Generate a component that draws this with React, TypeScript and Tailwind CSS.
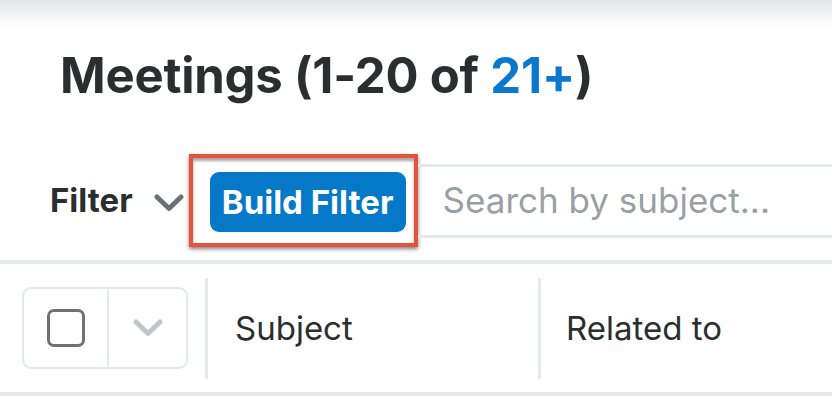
import React from 'react';

const font = { fontFamily: 'Inter, "Noto Sans", sans-serif' };

function Chevron({ className, stroke }: { className?: string; stroke: string }) {
  return (
    <svg className={className} width="30" height="18" viewBox="0 0 30 18" fill="none">
      <polyline points="3,3 15,14.5 27,3" stroke={stroke} strokeWidth="5" strokeLinecap="round" strokeLinejoin="round" />
    </svg>
  );
}

export default function App() {
  return (
    <div className="w-[832px] h-[396px] bg-white overflow-hidden text-[#2b2d2e]" style={font}>
      {/* header shadow */}
      <div className="h-[28px] bg-linear-to-b from-[#e3e4e6] to-white" />

      <h1 className="mt-[24px] pl-[60px] text-[49px] leading-[48px] font-bold tracking-[-0.2px]">
        Meetings (1-20 of <span className="text-[#0b78cf]">21+</span>)
      </h1>

      {/* filter row */}
      <div className="mt-[54px] h-[93px] flex items-center pl-[50px]">
        <span className="text-[33px] font-bold leading-none">Filter</span>
        <Chevron className="ml-[21px] mt-[4px]" stroke="#6b7276" />
        <div className="ml-[5px] w-[229px] h-[93px] shrink-0 border-4 border-[#e5533d] pl-[17px] pt-[14px] shadow-[0_2px_4px_rgba(0,0,0,0.5),inset_0_3px_3px_rgba(0,0,0,0.35)]">
          <button className="w-[196px] h-[60px] rounded-[9px] bg-[#0678c8] text-white text-[33px] font-bold leading-none">
            Build Filter
          </button>
        </div>
        <div className="flex-1 h-[74px] border-y-[3px] border-[#e6e9ec] flex items-center pl-[25px]">
          <span className="text-[35px] leading-none text-[#9a9fa4]">Search by subject...</span>
        </div>
      </div>

      {/* table header */}
      <div className="mt-[13px] h-[136px] border-y-4 border-[#e6e9ec] flex items-center">
        <div className="ml-[22px] w-[166px] h-[82px] shrink-0 border-2 border-[#e6e9ec] rounded-[9px] flex">
          <div className="w-[85px] border-r-2 border-[#e6e9ec] flex items-center justify-center">
            <div className="w-[38px] h-[38px] border-[3px] border-[#6f7173] rounded-[7px]" />
          </div>
          <div className="flex-1 flex items-center justify-center">
            <Chevron stroke="#c2c5c8" />
          </div>
        </div>
        <div className="ml-[17px] w-[3px] h-[101px] bg-[#e6e9ec]" />
        <div className="w-[330px] pl-[27px] text-[33px] leading-none">Subject</div>
        <div className="w-[3px] h-[101px] bg-[#e6e9ec]" />
        <div className="pl-[25px] text-[33px] leading-none">Related to</div>
      </div>
    </div>
  );
}
